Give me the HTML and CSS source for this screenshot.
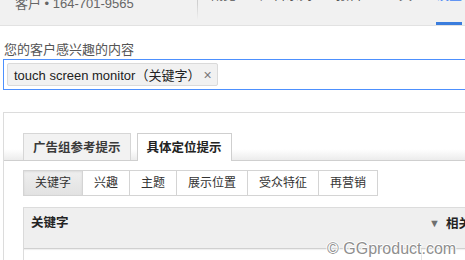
FILE: index.html
```html
<!DOCTYPE html>
<html lang="zh-CN">
<head>
<meta charset="utf-8">
<link rel="stylesheet" href="styles.css">
</head>
<body>
<div class="page">
  <header class="topbar">
    <div class="account">客户 • 164-701-9565</div>
    <span class="divider"></span>
    <nav class="nav">
      <span class="nav-item">概览</span>
      <span class="nav-item">广告系列</span>
      <span class="nav-item">报告</span>
      <span class="nav-item">工具</span>
      <span class="nav-item active">设置</span>
    </nav>
  </header>
  <main class="content">
    <div class="label">您的客户感兴趣的内容</div>
    <div class="input">
      <span class="chip">touch screen monitor（关键字）<span class="chip-x">×</span></span>
    </div>
    <section class="panel">
      <div class="tabs">
        <span class="tab">广告组参考提示</span>
        <span class="tab active">具体定位提示</span>
      </div>
      <div class="segments">
        <span class="seg selected">关键字</span>
        <span class="seg">兴趣</span>
        <span class="seg">主题</span>
        <span class="seg">展示位置</span>
        <span class="seg">受众特征</span>
        <span class="seg">再营销</span>
      </div>
      <div class="table">
        <div class="thead">
          <span class="th-key">关键字</span>
          <span class="th-rel"><span class="sort">▼</span>相关性</span>
        </div>
        <div class="trow">
          <span class="cell-key"></span>
          <span class="cell-rel"></span>
        </div>
      </div>
    </section>
  </main>
  <div class="watermark">© GGproduct.com</div>
</div>
</body>
</html>
```
FILE: styles.css
```css
html, body {
  margin: 0;
  padding: 0;
  overflow: hidden;
  background: #fff;
}
body {
  font-family: "Liberation Sans", Arial, "Noto Sans CJK SC", sans-serif;
  font-size: 13px;
  color: #222;
}
.page {
  width: 540px;
  position: relative;
  height: 260px;
  overflow: hidden;
}
.topbar {
  margin-top: -20px;
  height: 45px;
  box-sizing: content-box;
  background: #f1f1f1;
  border-bottom: 1px solid #e2e2e2;
  display: flex;
  align-items: flex-start;
}
.account {
  width: 182px;
  padding-left: 15px;
  padding-top: 16px;
  line-height: 16px;
  font-size: 13px;
  color: #666;
}
.divider {
  width: 1px;
  height: 40px;
  background: linear-gradient(#c8c8c8, #d0d0d0 60%, rgba(220,220,220,0));
}
.nav {
  display: flex;
  gap: 24px;
  padding-left: 12px;
  align-self: stretch;
}
.nav-item {
  box-sizing: border-box;
  height: 45px;
  padding-top: 7px;
  line-height: 16px;
  color: #555;
  font-size: 13px;
}
.nav-item.active {
  color: #4285f4;
  border-bottom: 3px solid #3b7ddd;
}
.content {
  padding: 0 0 0 3px;
}
.label {
  margin-top: 15px;
  margin-left: 1px;
  line-height: 17px;
  color: #555;
  font-size: 13px;
}
.input {
  margin-top: 1px;
  border: 1px solid #4d90fe;
  padding: 3px;
  box-sizing: border-box;
  height: 31px;
  display: flex;
  align-items: stretch;
}
.chip {
  display: flex;
  align-items: center;
  background: #f1f1f1;
  border: 1px solid #dadada;
  border-radius: 2px;
  padding: 0 5px 0 6px;
  color: #222;
  font-size: 13px;
}
.chip-x {
  margin-left: 3px;
  color: #777;
  font-size: 14px;
}
.panel {
  margin-top: 22px;
  border-top: 1px solid #dcdcdc;
  border-left: 1px solid #dcdcdc;
  padding-top: 20px;
}
.tabs {
  display: flex;
  gap: 6px;
  padding-left: 19px;
  border-bottom: 1px solid #cfcfcf;
  background: linear-gradient(rgba(238,238,238,0) 0, rgba(238,238,238,0) 60%, #ececec 100%);
  height: 27px;
}
.tab {
  box-sizing: border-box;
  height: 27px;
  padding: 5px 9px 0;
  border: 1px solid #d6d6d6;
  border-bottom: none;
  background: #f2f2f2;
  font-weight: bold;
  font-size: 12.5px;
  line-height: 18px;
  color: #3a3a3a;
}
.tab.active {
  background: #fff;
  height: 28px;
  border-color: #cfcfcf;
  color: #222;
}
.segments {
  display: flex;
  margin: 9px 0 0 19px;
}
.seg {
  box-sizing: border-box;
  height: 26px;
  padding: 0 11px;
  border: 1px solid #d4d4d4;
  border-left: none;
  font-size: 12px;
  line-height: 24px;
  color: #333;
  background: #fff;
}
.seg:first-child {
  border-left: 1px solid #d4d4d4;
}
.seg.selected {
  background: linear-gradient(#efefef, #e2e2e2);
  box-shadow: inset 0 1px 2px rgba(0,0,0,0.08);
}
.table {
  margin: 11px 0 0 19px;
  border-left: 1px solid #dcdcdc;
}
.thead {
  height: 42px;
  box-sizing: border-box;
  background: #efefef;
  border-top: 1px solid #dcdcdc;
  border-bottom: 1px solid #d0d0d0;
  display: flex;
  justify-content: space-between;
  padding: 6px 0 0 7px;
  box-shadow: 0 1px 1px rgba(0,0,0,0.06);
}
.th-key, .th-rel {
  font-weight: bold;
  font-size: 12.5px;
  line-height: 18px;
  color: #222;
}
.th-rel {
  width: 111px;
  white-space: nowrap;
}
.sort {
  color: #6f6f6f;
  font-size: 11px;
  margin-right: 6px;
  vertical-align: 1px;
}
.trow {
  height: 20px;
  display: flex;
  justify-content: space-between;
}
.cell-rel {
  width: 118px;
  border-left: 1px solid #e4e4e4;
}
.watermark {
  position: absolute;
  left: 327px;
  top: 240px;
  font-family: "Liberation Sans", Arial, sans-serif;
  font-size: 16px;
  color: #8f8f8f;
  text-shadow: 1px 0 0 #fff, -1px 0 0 #fff, 0 1px 0 #fff, 0 -1px 0 #fff;
  white-space: nowrap;
}
```
